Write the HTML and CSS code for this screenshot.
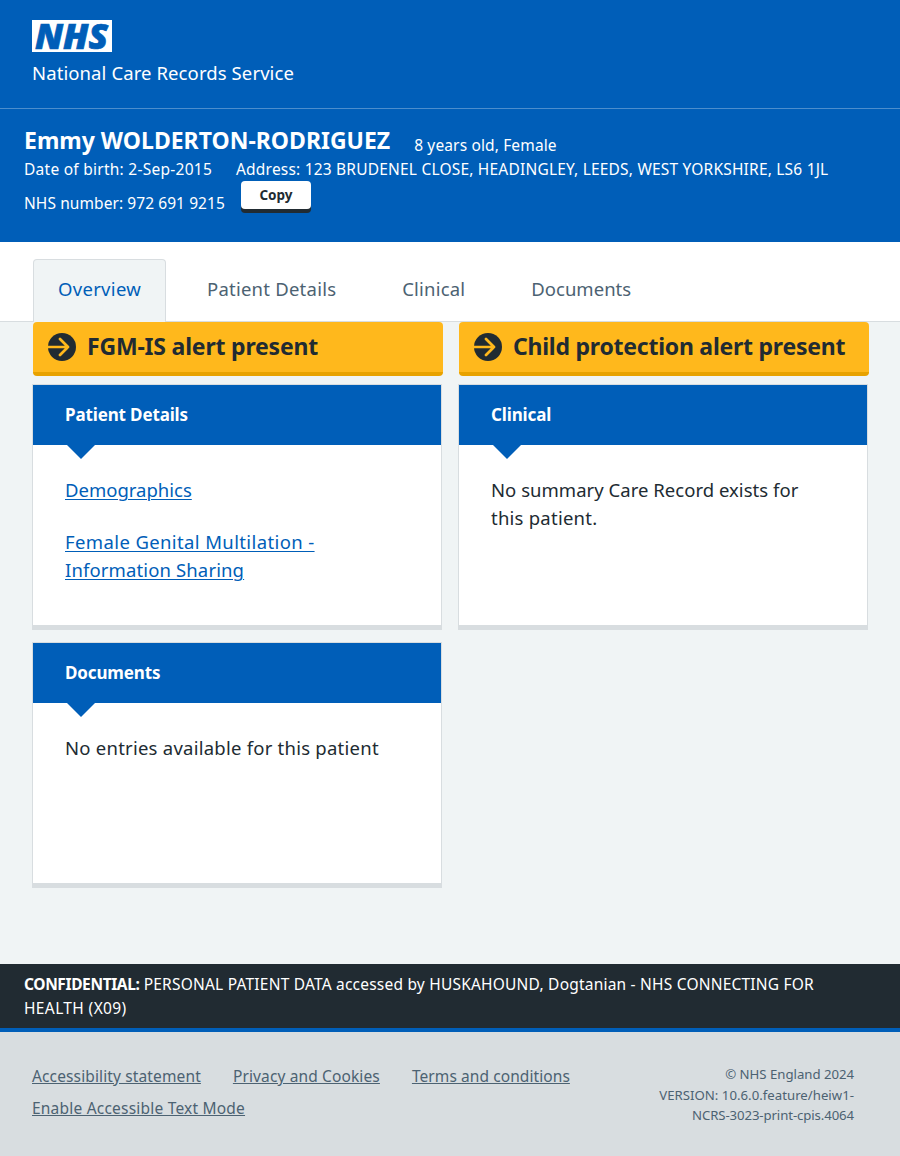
FILE: index.html
```html
<!DOCTYPE html>
<html lang="en">
<head>
<meta charset="utf-8">
<title>National Care Records Service</title>
<link rel="stylesheet" href="styles.css">
</head>
<body>
<header class="header">
  <svg class="logo" width="80" height="32" viewBox="0 0 80 32" role="img" aria-label="NHS">
    <rect width="80" height="32" fill="#fff"/>
    <text class="logo-text" x="3" y="28.7" textLength="73" lengthAdjust="spacingAndGlyphs">NHS</text>
  </svg>
  <div class="service">National Care Records Service</div>
</header>

<section class="banner">
  <div class="row row-name"><h1 class="name">Emmy WOLDERTON-RODRIGUEZ</h1><span class="age">8 years old, Female</span></div>
  <div class="row"><span class="dob">Date of birth: 2-Sep-2015</span><span class="address">Address: 123 BRUDENEL CLOSE, HEADINGLEY, LEEDS, WEST YORKSHIRE, LS6 1JL</span></div>
  <div class="row row-nhs"><span class="nhs-number">NHS number: 972 691 9215</span><button class="copy">Copy</button></div>
</section>

<nav class="tabs">
  <a class="tab tab-active">Overview</a>
  <a class="tab tab-patient">Patient Details</a>
  <a class="tab tab-clinical">Clinical</a>
  <a class="tab tab-documents">Documents</a>
</nav>

<main class="main">
  <div class="alerts">
    <a class="alert alert-fgm">
      <svg class="alert-icon" width="28" height="28" viewBox="0 0 28 28"><circle cx="14" cy="14" r="14" fill="#212b32"/><path d="M0 14H20M12 6L20 14L12 22" fill="none" stroke="#ffb81c" stroke-width="2.7" stroke-linecap="round" stroke-linejoin="round"/></svg>
      <span class="alert-text">FGM-IS alert present</span>
    </a>
    <a class="alert alert-child">
      <svg class="alert-icon" width="28" height="28" viewBox="0 0 28 28"><circle cx="14" cy="14" r="14" fill="#212b32"/><path d="M0 14H20M12 6L20 14L12 22" fill="none" stroke="#ffb81c" stroke-width="2.7" stroke-linecap="round" stroke-linejoin="round"/></svg>
      <span class="alert-text">Child protection alert present</span>
    </a>
  </div>
  <div class="cards">
    <article class="card">
      <h2 class="card-title">Patient Details</h2>
      <div class="card-body">
        <p><a class="link">Demographics</a></p>
        <p><a class="link"><span class="wide">Female Genital Multilation -</span><br><span class="mid">Information Sharing</span></a></p>
      </div>
    </article>
    <article class="card">
      <h2 class="card-title">Clinical</h2>
      <div class="card-body"><p><span class="normal">No summary Care Record exists for</span><br><span class="loose">this patient.</span></p></div>
    </article>
    <article class="card">
      <h2 class="card-title">Documents</h2>
      <div class="card-body"><p class="loose">No entries available for this patient</p></div>
    </article>
  </div>
</main>

<div class="confidential"><strong>CONFIDENTIAL:</strong> <span>PERSONAL PATIENT DATA accessed by HUSKAHOUND, Dogtanian - NHS CONNECTING FOR</span><br><span class="wide">HEALTH (X09)</span></div>

<footer class="footer">
  <div class="footer-links">
    <a class="footer-link">Accessibility statement</a>
    <a class="footer-link">Privacy and Cookies</a>
    <a class="footer-link footer-link-terms">Terms and conditions</a>
    <a class="footer-link footer-link-mode">Enable Accessible Text Mode</a>
  </div>
  <div class="version">© NHS England 2024<br><span class="version-name">VERSION: 10.6.0.feature/heiw1-</span><br><span class="version-build">NCRS-3023-print-cpis.4064</span></div>
</footer>
</body>
</html>
```
FILE: styles.css
```css
* { box-sizing: border-box; }
body {
  margin: 0;
  background: #f0f4f5;
  color: #212b32;
  font-family: "Noto Sans", "Open Sans", sans-serif;
  font-size: 18.5px;
  line-height: 28px;
}
h1, h2, p { margin: 0; }

.header {
  height: 109px;
  padding: 20px 32px 0;
  background: #005eb8;
  border-bottom: 1px solid #4c8ecd;
  color: #fff;
}
.logo { display: block; overflow: visible; }
.logo-text {
  font-family: "Open Sans", sans-serif;
  font-weight: 800;
  font-style: italic;
  font-size: 35px;
  fill: #005eb8;
  stroke: #005eb8;
  stroke-width: 0.7px;
}
.service { margin-top: 7px; letter-spacing: 0.1px; }

.banner {
  height: 133px;
  padding: 16px 24px 0;
  background: #005eb8;
  color: #fff;
  font-size: 15.5px;
  line-height: 24px;
}
.row { display: flex; gap: 24px; white-space: nowrap; }
.row-name { height: 32px; }
.name { font-size: 23px; font-weight: 700; line-height: 30px; }
.age { padding-top: 8px; letter-spacing: 0.14px; }
.dob { letter-spacing: 0.26px; }
.address { letter-spacing: 0.2px; }
.row-nhs { gap: 16px; }
.nhs-number { padding-top: 10px; letter-spacing: 0.08px; }
.copy {
  width: 70px;
  height: 28px;
  padding: 1px 0 0;
  border: 0;
  border-radius: 4px;
  background: #fff;
  box-shadow: 0 4px 0 #212b32;
  color: #212b32;
  font: 700 13.5px/27px "Noto Sans", sans-serif;
}

.tabs {
  display: flex;
  height: 80px;
  padding: 17px 33px 0;
  background: #fff;
  border-bottom: 1px solid #d8dde0;
}
.tab {
  height: 63px;
  margin-right: 16px;
  padding: 16px 25px 0;
  color: #4c6272;
}
.tab-active {
  width: 133px;
  padding: 15px 24px 0;
  border: 1px solid #d8dde0;
  border-bottom: 0;
  border-radius: 4px 4px 0 0;
  background: #f0f4f5;
  color: #005eb8;
  letter-spacing: 0.3px;
}
.tab-patient { letter-spacing: 0.23px; }
.tab-clinical { letter-spacing: 0.19px; }
.tab-documents { letter-spacing: 0.03px; }

.main { height: 642px; padding: 0 31px 0 32px; }
.alerts { display: flex; gap: 16px; padding-left: 1px; }
.alert {
  display: flex;
  flex: none;
  align-items: center;
  gap: 11px;
  width: 410px;
  height: 54px;
  padding-left: 15px;
  border-bottom: 4px solid #e8a200;
  border-radius: 4px;
  background: #ffb81c;
  font-size: 23px;
  font-weight: 700;
}
.alert-text { padding-bottom: 2px; white-space: nowrap; }
.alert-fgm { letter-spacing: -0.19px; }
.alert-child { letter-spacing: -0.24px; }
.cards {
  display: grid;
  grid-template-columns: 410px 410px;
  gap: 12px 16px;
  margin-top: 8px;
}
.card {
  height: 246px;
  border: 1px solid #d8dde0;
  border-bottom-width: 5px;
  background: #fff;
}
.card-title {
  position: relative;
  height: 60px;
  padding: 16px 32px;
  background: #005eb8;
  color: #fff;
  font-size: 17px;
  font-weight: 700;
  letter-spacing: -0.14px;
}
.card-title::after {
  content: "";
  position: absolute;
  top: 60px;
  left: 33.5px;
  border: 14.5px solid transparent;
  border-top-color: #005eb8;
  border-bottom: 0;
}
.card-body { padding: 31px 32px; }
.card-body p { margin-bottom: 24px; white-space: nowrap; }
.link { color: #005eb8; text-decoration: underline; text-underline-offset: 2px; text-decoration-thickness: 1px; }
.normal { letter-spacing: 0.03px; }
.mid { letter-spacing: 0.13px; }
.wide { letter-spacing: 0.38px; }
.loose { letter-spacing: 0.24px; }

.confidential {
  height: 64px;
  padding: 8px 24px;
  background: #212b32;
  color: #fff;
  font-size: 15.5px;
  line-height: 24px;
  letter-spacing: 0.21px;
  white-space: nowrap;
}
.confidential strong { font-weight: 700; letter-spacing: -0.38px; }

.footer {
  display: flex;
  justify-content: space-between;
  height: 128px;
  padding: 32px 46px 0 32px;
  border-top: 4px solid #005eb8;
  background: #d8dde0;
  color: #4c6272;
}
.footer-links {
  display: flex;
  flex-wrap: wrap;
  align-content: flex-start;
  gap: 8px 32px;
  width: 560px;
  font-size: 15.5px;
  line-height: 24px;
}
.footer-link { text-decoration: underline; text-underline-offset: 1px; letter-spacing: 0.13px; }
.footer-link-terms { letter-spacing: 0.08px; }
.footer-link-mode { letter-spacing: 0.21px; }
.version { font-size: 13.2px; line-height: 20.5px; text-align: right; letter-spacing: -0.02px; white-space: nowrap; }
.version-name { letter-spacing: 0.02px; }
.version-build { letter-spacing: -0.1px; }
```
